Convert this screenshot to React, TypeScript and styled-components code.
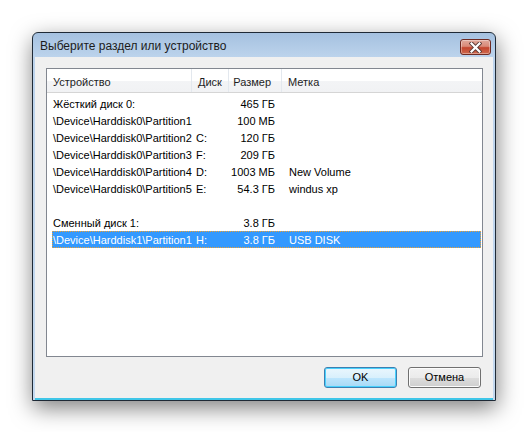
import React from "react";
import styled, { createGlobalStyle } from "styled-components";

const GlobalStyle = createGlobalStyle`
  html, body {
    margin: 0;
    padding: 0;
    background: #fff;
  }
  body {
    font-family: "Liberation Sans", Arial, sans-serif;
    font-size: 11px;
    color: #000;
  }
`;

const partitions = [
  { id: 1, name: "Жёсткий диск 0:", disk: "", size: "465 ГБ", label: "" },
  { id: 2, name: "\\Device\\Harddisk0\\Partition1", disk: "", size: "100 МБ", label: "" },
  { id: 3, name: "\\Device\\Harddisk0\\Partition2", disk: "C:", size: "120 ГБ", label: "" },
  { id: 4, name: "\\Device\\Harddisk0\\Partition3", disk: "F:", size: "209 ГБ", label: "" },
  { id: 5, name: "\\Device\\Harddisk0\\Partition4", disk: "D:", size: "1003 МБ", label: "New Volume" },
  { id: 6, name: "\\Device\\Harddisk0\\Partition5", disk: "E:", size: "54.3 ГБ", label: "windus xp" },
  { id: 7, name: "", disk: "", size: "", label: "" },
  { id: 8, name: "Сменный диск 1:", disk: "", size: "3.8 ГБ", label: "" },
  { id: 9, name: "\\Device\\Harddisk1\\Partition1", disk: "H:", size: "3.8 ГБ", label: "USB DISK", selected: true },
];

const Stage = styled.div`
  width: 528px;
  height: 432px;
  padding: 32px 0 0 32px;
  box-sizing: border-box;
`;

const Window = styled.div`
  width: 464px;
  height: 369px;
  box-sizing: border-box;
  border: 1px solid #1f2a36;
  border-radius: 6px 6px 0 0;
  background: linear-gradient(to bottom, #a5c1e0 0px, #bcd3ec 24px, #c4d9ef 100%);
  box-shadow: 1px 7px 22px rgba(0, 0, 0, 0.5);
  display: flex;
  flex-direction: column;
  padding: 0 2px 0 2px;
`;

const TitleBar = styled.div`
  flex-shrink: 0;
  height: 24px;
  display: flex;
  align-items: center;
  justify-content: space-between;
  padding: 0 2px 0 5px;
`;

const Title = styled.span`
  font-size: 12px;
  color: #1b1b1b;
  padding-top: 2px;
`;

const CloseButton = styled.div`
  width: 31px;
  height: 16px;
  box-sizing: border-box;
  border: 1px solid #6e2a22;
  border-radius: 3px;
  background: linear-gradient(to bottom, #e0a99c 0%, #d98a78 45%, #c3452d 55%, #cf6a4f 100%);
  display: flex;
  align-items: center;
  justify-content: center;
  margin-top: 4px;
  box-shadow: inset 0 0 0 1px rgba(255, 255, 255, 0.35);
`;

const Client = styled.div`
  flex: 1;
  min-height: 0;
  background: #f0f0f0;
  padding: 11px 10px 0 11px;
  display: flex;
  flex-direction: column;
  border-bottom: 2px solid #3fc6e8;
`;

const ListBox = styled.div`
  flex-shrink: 0;
  height: 289px;
  box-sizing: border-box;
  border: 1px solid #828790;
  background: #fff;
`;

const Header = styled.div`
  display: grid;
  grid-template-columns: 145px 37px 53px 1fr;
  height: 24px;
  background: linear-gradient(to bottom, #ffffff 0%, #ffffff 50%, #f3f4f6 51%, #f1f2f4 100%);
  border-bottom: 1px solid #d5d5d5;
  box-sizing: border-box;
`;

const HeaderCell = styled.div<{ $right?: boolean }>`
  display: flex;
  align-items: center;
  justify-content: ${(p) => (p.$right ? "flex-end" : "flex-start")};
  padding: 2px ${(p) => (p.$right ? "10px" : "6px")} 0 6px;
  border-right: 1px solid #e3e8ee;
  color: #1e1e1e;
  white-space: nowrap;
  &:last-child {
    border-right: none;
  }
`;

const Rows = styled.div`
  padding-top: 2px;
`;

const Row = styled.div<{ $selected?: boolean }>`
  display: grid;
  grid-template-columns: 140px 37px 53px 1fr;
  height: 17px;
  margin: 0 1px 0 5px;
  box-sizing: border-box;
  background: ${(p) => (p.$selected ? "#3399ff" : "transparent")};
  color: ${(p) => (p.$selected ? "#fff" : "#000")};
  outline: ${(p) => (p.$selected ? "1px dotted #f0a030" : "none")};
  outline-offset: -1px;
`;

const Cell = styled.div<{ $right?: boolean; $pad?: string }>`
  display: flex;
  align-items: center;
  justify-content: ${(p) => (p.$right ? "flex-end" : "flex-start")};
  padding: ${(p) => p.$pad || "0"};
  white-space: nowrap;
  overflow: hidden;
`;

const ButtonRow = styled.div`
  flex-shrink: 0;
  display: flex;
  justify-content: flex-end;
  gap: 11px;
  margin-top: 10px;
  padding-right: 2px;
`;

const Button = styled.button<{ $default?: boolean }>`
  width: 73px;
  height: 21px;
  box-sizing: border-box;
  font-family: inherit;
  font-size: 11px;
  color: #000;
  border: 1px solid ${(p) => (p.$default ? "#3c7fb1" : "#707070")};
  border-radius: 3px;
  background: ${(p) =>
    p.$default
      ? "linear-gradient(to bottom, #eaf6fd 0%, #d9f0fc 50%, #bee6fd 51%, #a7d9f5 100%)"
      : "linear-gradient(to bottom, #f2f2f2 0%, #ebebeb 50%, #dddddd 51%, #cfcfcf 100%)"};
  box-shadow: inset 0 0 0 1px ${(p) => (p.$default ? "#48d1fd" : "#fcfcfc")};
  padding: 0 0 1px 0;
`;

export default function App() {
  return (
    <Stage>
      <GlobalStyle />
      <Window>
        <TitleBar>
          <Title>Выберите раздел или устройство</Title>
          <CloseButton>
            <svg width="13" height="11" viewBox="0 0 13 11">
              <path
                d="M2.5 1.5 L10.5 9.5 M10.5 1.5 L2.5 9.5"
                stroke="#5a3a36"
                strokeWidth="4"
                strokeLinecap="square"
              />
              <path
                d="M2.5 1.5 L10.5 9.5 M10.5 1.5 L2.5 9.5"
                stroke="#fff"
                strokeWidth="2.2"
                strokeLinecap="square"
              />
            </svg>
          </CloseButton>
        </TitleBar>
        <Client>
          <ListBox>
            <Header>
              <HeaderCell>Устройство</HeaderCell>
              <HeaderCell>Диск</HeaderCell>
              <HeaderCell $right>Размер</HeaderCell>
              <HeaderCell>Метка</HeaderCell>
            </Header>
            <Rows>
              {partitions.map((p) => (
                <Row key={p.id} $selected={p.selected}>
                  <Cell $pad="0 0 0 1px">{p.name}</Cell>
                  <Cell $pad="0 0 0 4px">{p.disk}</Cell>
                  <Cell $right $pad="0 7px 0 0">{p.size}</Cell>
                  <Cell $pad="0 0 0 7px">{p.label}</Cell>
                </Row>
              ))}
            </Rows>
          </ListBox>
          <ButtonRow>
            <Button $default>OK</Button>
            <Button>Отмена</Button>
          </ButtonRow>
        </Client>
      </Window>
    </Stage>
  );
}
